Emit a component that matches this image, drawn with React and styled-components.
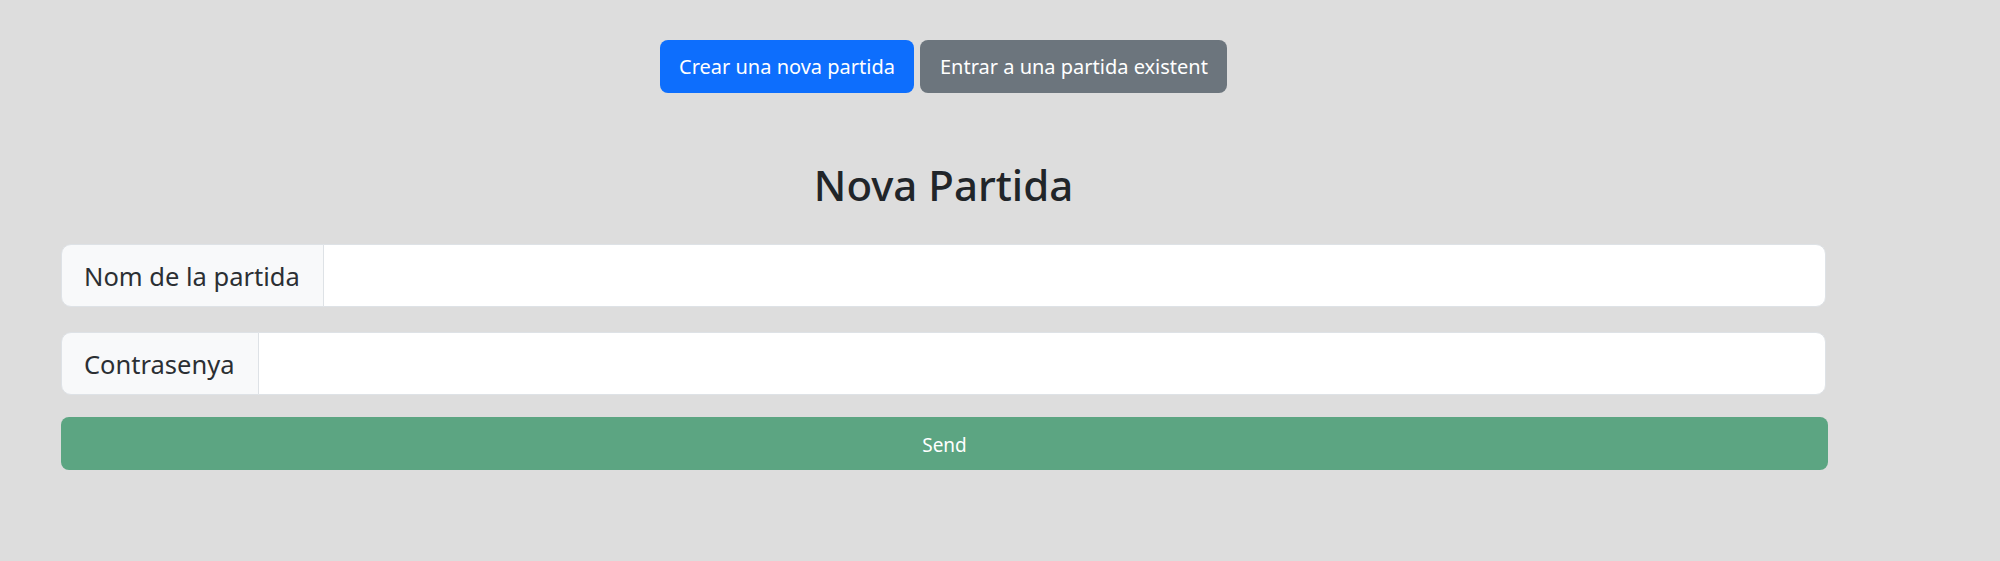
import React from "react";
import styled, { createGlobalStyle } from "styled-components";

const GlobalStyle = createGlobalStyle`
  body {
    margin: 0;
    background: #dddddd;
    font-family: "Noto Sans", "Open Sans", sans-serif;
    color: #212529;
  }
`;

const Page = styled.div`
  width: 1765px;
  padding: 40px 0 0 61px;
`;

const ButtonRow = styled.div`
  display: flex;
  justify-content: center;
  gap: 6px;
`;

const TabButton = styled.button`
  height: 53px;
  padding: 0 19.5px;
  border: none;
  border-radius: 8px;
  font-family: inherit;
  font-size: 20px;
  color: #fff;
  background: ${(p) => (p.$active ? "#0d6efd" : "#6c757d")};
  cursor: pointer;
`;

const Title = styled.h2`
  margin: 67px 0 34px;
  font-size: 42px;
  font-weight: 500;
  line-height: 1.2;
  text-align: center;
`;

const Form = styled.form`
  display: flex;
  flex-direction: column;
`;

const InputGroup = styled.div`
  display: flex;
  height: 63px;
  margin-bottom: ${(p) => p.$gap}px;
`;

const Label = styled.span`
  display: flex;
  align-items: center;
  padding: 0 23px 0 22px;
  font-size: 25.5px;
  color: #2b2f33;
  background: #f8f9fa;
  border: 1px solid #dee2e6;
  border-radius: 10px 0 0 10px;
`;

const Input = styled.input`
  flex: 1;
  margin-left: -1px;
  border: 1px solid #dee2e6;
  border-radius: 0 10px 10px 0;
  background: #fff;
  font-size: 25px;
  outline: none;
`;

const SendButton = styled.button`
  height: 53px;
  width: 1767px;
  padding-top: 3px;
  border: none;
  border-radius: 8px;
  background: #5ca582;
  color: #fff;
  font-family: inherit;
  font-size: 19px;
`;

export default function App() {
  return (
    <>
      <GlobalStyle />
      <Page>
        <ButtonRow>
          <TabButton $active>Crear una nova partida</TabButton>
          <TabButton>Entrar a una partida existent</TabButton>
        </ButtonRow>
        <Title>Nova Partida</Title>
        <Form onSubmit={(e) => e.preventDefault()}>
          <InputGroup $gap={25}>
            <Label>Nom de la partida</Label>
            <Input type="text" />
          </InputGroup>
          <InputGroup $gap={22}>
            <Label>Contrasenya</Label>
            <Input type="password" />
          </InputGroup>
          <SendButton type="submit">Send</SendButton>
        </Form>
      </Page>
    </>
  );
}
